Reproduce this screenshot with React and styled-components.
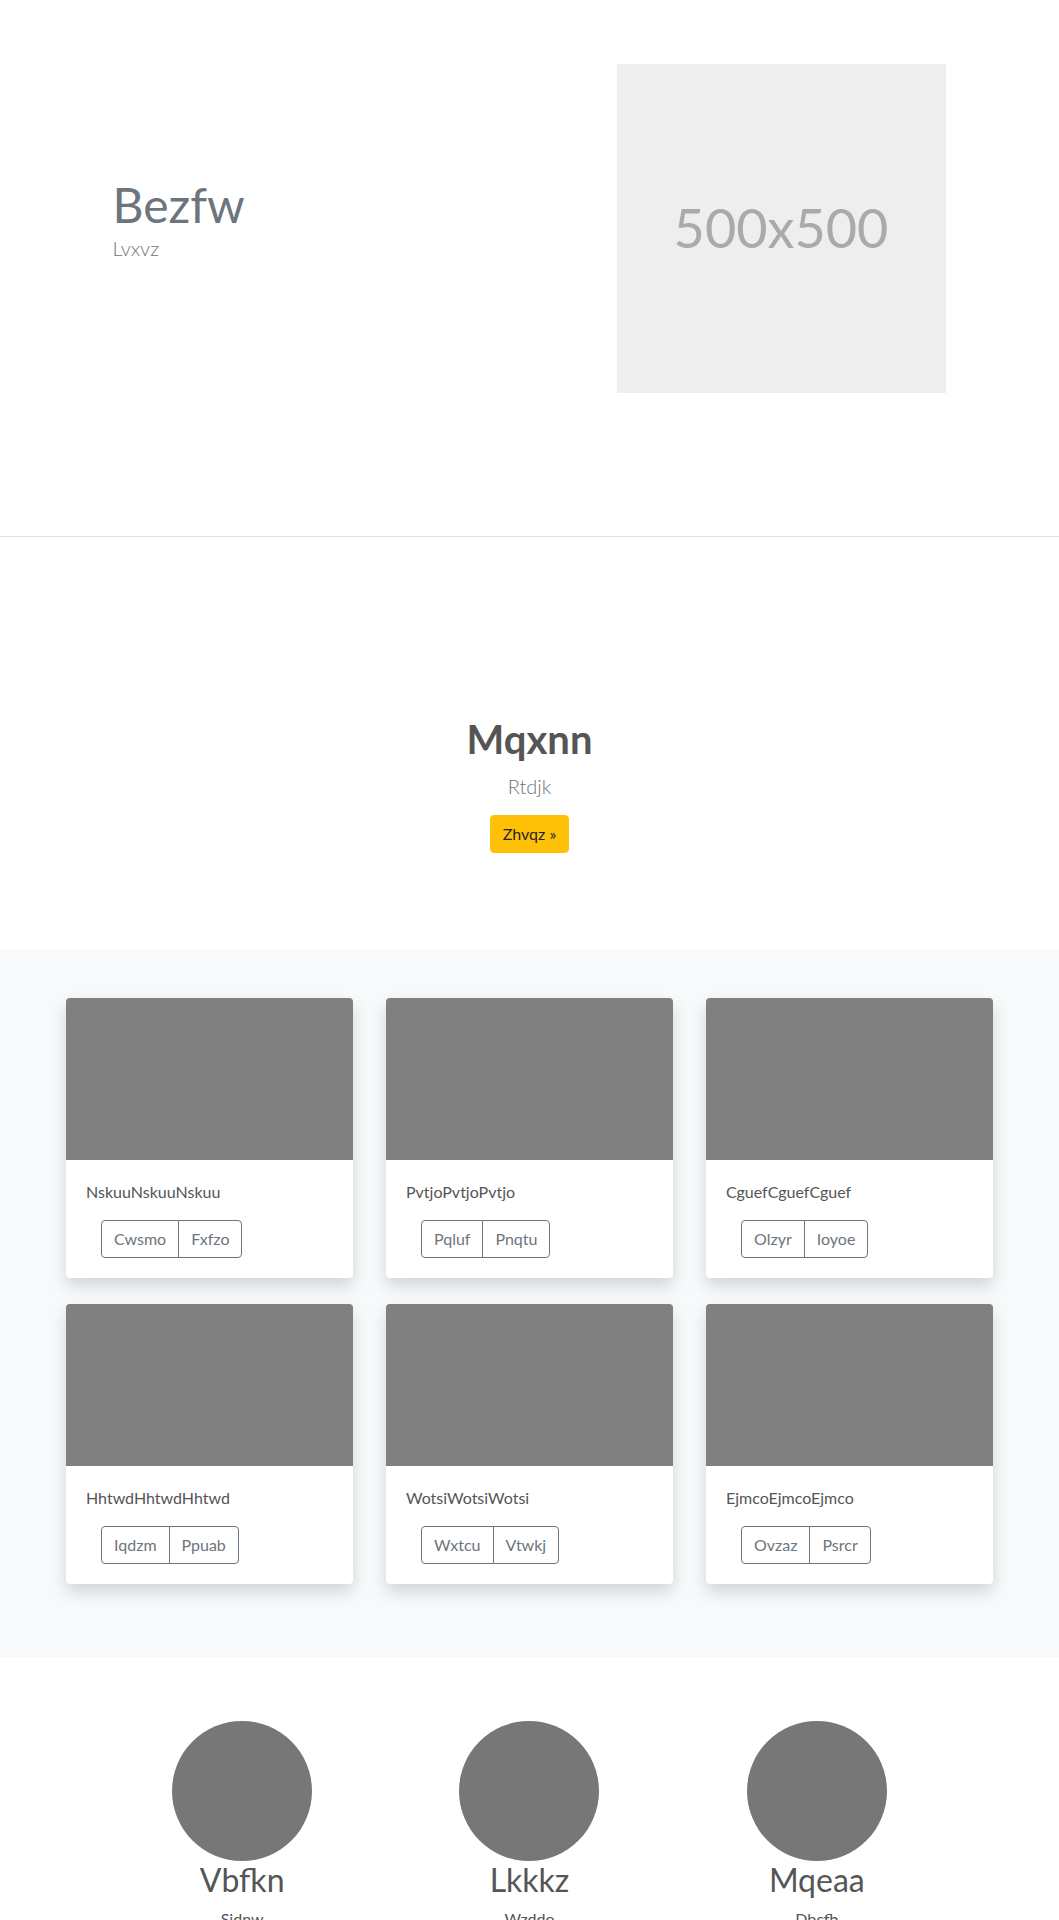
import React from 'react'
import styled, { createGlobalStyle } from 'styled-components'

const GlobalStyle = createGlobalStyle`
    body {
        margin: 0;
        font-family: Lato, "Open Sans", sans-serif;
        font-size: 16px;
        line-height: 1.5;
        color: #212529;
        background: #fff;
    }
    * { box-sizing: border-box; }
`

const cards = [
    { title: 'NskuuNskuuNskuu', buttons: ['Cwsmo', 'Fxfzo'] },
    { title: 'PvtjoPvtjoPvtjo', buttons: ['Pqluf', 'Pnqtu'] },
    { title: 'CguefCguefCguef', buttons: ['Olzyr', 'Ioyoe'] },
    { title: 'HhtwdHhtwdHhtwd', buttons: ['Iqdzm', 'Ppuab'] },
    { title: 'WotsiWotsiWotsi', buttons: ['Wxtcu', 'Vtwkj'] },
    { title: 'EjmcoEjmcoEjmco', buttons: ['Ovzaz', 'Psrcr'] },
]

const team = [
    { name: 'Vbfkn', role: 'Sidnw' },
    { name: 'Lkkkz', role: 'Wzddo' },
    { name: 'Mqeaa', role: 'Dbcfb' },
]

const App = () => {
    return (
        <>
            <GlobalStyle />
            <Hero>
                <HeroRow>
                    <HeroText>
                        <HeroTitle>Bezfw</HeroTitle>
                        <Lead $mb="18px">Lvxvz</Lead>
                    </HeroText>
                    <HeroImage>500x500</HeroImage>
                </HeroRow>
            </Hero>

            <Intro>
                <IntroTitle>Mqxnn</IntroTitle>
                <Lead $center $mb="14px">Rtdjk</Lead>
                <WarningButton>Zhvqz »</WarningButton>
            </Intro>

            <Album>
                <CardGrid>
                    {cards.map((c) => (
                        <Card key={c.title}>
                            <CardImage />
                            <CardBody>
                                <CardText>{c.title}</CardText>
                                <BtnGroup>
                                    {c.buttons.map((b) => (
                                        <OutlineButton key={b}>{b}</OutlineButton>
                                    ))}
                                </BtnGroup>
                            </CardBody>
                        </Card>
                    ))}
                </CardGrid>
            </Album>

            <Team>
                <TeamGrid>
                    {team.map((t) => (
                        <Member key={t.name}>
                            <Avatar />
                            <MemberName>{t.name}</MemberName>
                            <MemberRole>{t.role}</MemberRole>
                        </Member>
                    ))}
                </TeamGrid>
            </Team>
        </>
    )
}

export default App

const Hero = styled.section`
    border-bottom: 1px solid #e0e0e0;
    padding: 64px 0 143px;
`

const HeroRow = styled.div`
    width: 960px;
    margin: 0 auto;
    display: grid;
    grid-template-columns: 1fr 1fr;
    align-items: center;
`

const HeroText = styled.div`
    padding-left: 63px;
`

const HeroTitle = styled.h1`
    margin: 0;
    font-size: 48px;
    font-weight: 400;
    line-height: 1.2;
    color: #6c757d;
`

const Lead = styled.p`
    margin: 0 0 ${(p) => p.$mb || '16px'};
    font-size: 20px;
    font-weight: 300;
    line-height: 1.5;
    color: #6c757d;
    text-align: ${(p) => (p.$center ? 'center' : 'left')};
`

const HeroImage = styled.div`
    justify-self: end;
    margin-right: 64px;
    width: 329px;
    height: 329px;
    background: #eee;
    color: #aaa;
    font-size: 54px;
    display: flex;
    align-items: center;
    justify-content: center;
    padding-bottom: 2px;
`

const Intro = styled.section`
    padding: 178px 0 96px;
    display: flex;
    flex-direction: column;
    align-items: center;
`

const IntroTitle = styled.h1`
    margin: 0 0 8px;
    font-size: 40px;
    font-weight: 700;
    line-height: 1.2;
    color: #555;
`

const WarningButton = styled.button`
    font-family: inherit;
    font-size: 16px;
    line-height: 1.5;
    padding: 6px 12px;
    border: 1px solid #ffc107;
    border-radius: 4px;
    background: #ffc107;
    color: #212529;
`

const Album = styled.section`
    background: #f8f9fa;
    padding: 49px 0 73px;
`

const CardGrid = styled.div`
    width: 927px;
    margin: 0 auto;
    display: grid;
    grid-template-columns: repeat(3, 287px);
    column-gap: 33px;
    row-gap: 26px;
`

const Card = styled.div`
    background: #fff;
    border-radius: 4px;
    overflow: hidden;
    box-shadow: 0 8px 16px rgba(0, 0, 0, 0.15);
`

const CardImage = styled.div`
    height: 162px;
    background: #808080;
`

const CardBody = styled.div`
    padding: 20px;
`

const CardText = styled.p`
    margin: 0 0 16px;
    color: #555;
`

const BtnGroup = styled.div`
    display: inline-flex;
    margin-left: 15px;
`

const OutlineButton = styled.button`
    font-family: inherit;
    font-size: 16px;
    line-height: 1.5;
    padding: 6px 12px;
    background: transparent;
    color: #6c757d;
    border: 1px solid #6c757d;

    &:first-child {
        border-radius: 4px 0 0 4px;
    }
    &:last-child {
        margin-left: -1px;
        border-radius: 0 4px 4px 0;
    }
`

const Team = styled.section`
    padding: 64px 0 48px;
`

const TeamGrid = styled.div`
    width: 862px;
    margin: 0 auto;
    display: grid;
    grid-template-columns: repeat(3, 1fr);
`

const Member = styled.div`
    display: flex;
    flex-direction: column;
    align-items: center;
`

const Avatar = styled.div`
    width: 140px;
    height: 140px;
    border-radius: 50%;
    background: #777;
`

const MemberName = styled.h2`
    margin: 0 0 8px;
    font-size: 32px;
    font-weight: 400;
    line-height: 1.2;
    color: #555;
`

const MemberRole = styled.p`
    margin: 0;
    color: #555;
`
